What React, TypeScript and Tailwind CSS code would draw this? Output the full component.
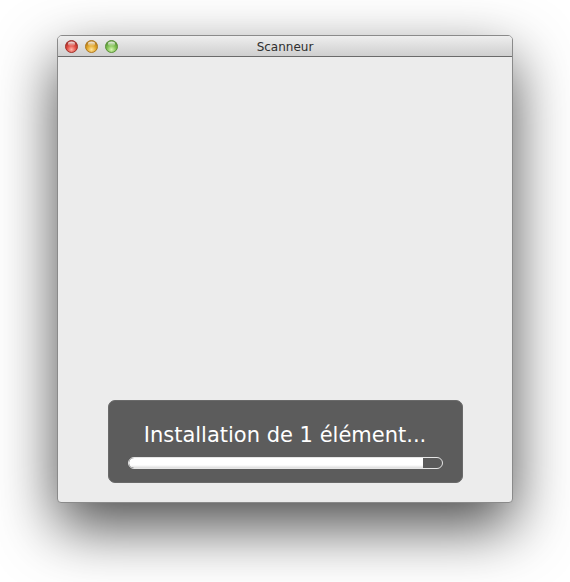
import React from "react";

function Light({ id, base, dark, light }: { id: string; base: string; dark: string; light: string }) {
  return (
    <svg width="13" height="13" viewBox="0 0 13 13" className="block">
      <defs>
        <radialGradient id={`g-${id}`} cx="50%" cy="75%" r="65%">
          <stop offset="0%" stopColor={light} />
          <stop offset="60%" stopColor={base} />
          <stop offset="100%" stopColor={dark} />
        </radialGradient>
        <linearGradient id={`h-${id}`} x1="0" y1="0" x2="0" y2="1">
          <stop offset="0%" stopColor="#ffffff" stopOpacity="0.9" />
          <stop offset="100%" stopColor="#ffffff" stopOpacity="0" />
        </linearGradient>
      </defs>
      <circle cx="6.5" cy="6.5" r="6" fill={`url(#g-${id})`} stroke={dark} strokeWidth="1" />
      <ellipse cx="6.5" cy="4" rx="3.6" ry="2.4" fill={`url(#h-${id})`} />
    </svg>
  );
}

export default function App() {
  return (
    <div className="w-[570px] h-[582px] bg-white overflow-hidden pt-[35px] pl-[57px]">
      <div className="w-[456px] h-[468px] flex flex-col rounded-t-[5px] rounded-b-[4px] border border-[#8a8a8a] bg-[#ececec] shadow-[0_24px_60px_rgba(0,0,0,0.7)] overflow-hidden">
        <div className="relative h-[21px] shrink-0 flex items-center border-b border-[#6a6a6a] bg-[linear-gradient(#eeeeee,#cfcfcf)]">
          <div className="flex items-center gap-[7px] pl-[7px]">
            <Light id="r" base="#e0493f" dark="#a3322c" light="#ffb3a8" />
            <Light id="y" base="#e0a425" dark="#b07a22" light="#ffe39a" />
            <Light id="g" base="#7cbf4f" dark="#5c923b" light="#d6f5b0" />
          </div>
          <div className="absolute inset-0 flex items-center justify-center pt-[1px] text-[12px] text-[#2f2f2f] font-['DejaVu_Sans',sans-serif]">
            Scanneur
          </div>
        </div>
        <div className="flex-1 flex flex-col justify-end items-center pb-[19px]">
          <div className="w-[355px] h-[83px] rounded-[7px] bg-[#5c5c5c] border border-[#6a6a6a] flex flex-col items-center pt-[22px] px-[19px]">
            <div className="text-[21px] leading-[24px] text-white font-['DejaVu_Sans',sans-serif] whitespace-nowrap">
              Installation de 1 élément...
            </div>
            <div className="mt-[10px] w-[315px] h-[12px] rounded-full border border-[#e6e6e6] bg-[#5a5a5a] overflow-hidden">
              <div className="h-full w-[294px] rounded-l-full bg-[linear-gradient(#ffffff,#ffffff_70%,#dcdcdc)]" />
            </div>
          </div>
        </div>
      </div>
    </div>
  );
}
